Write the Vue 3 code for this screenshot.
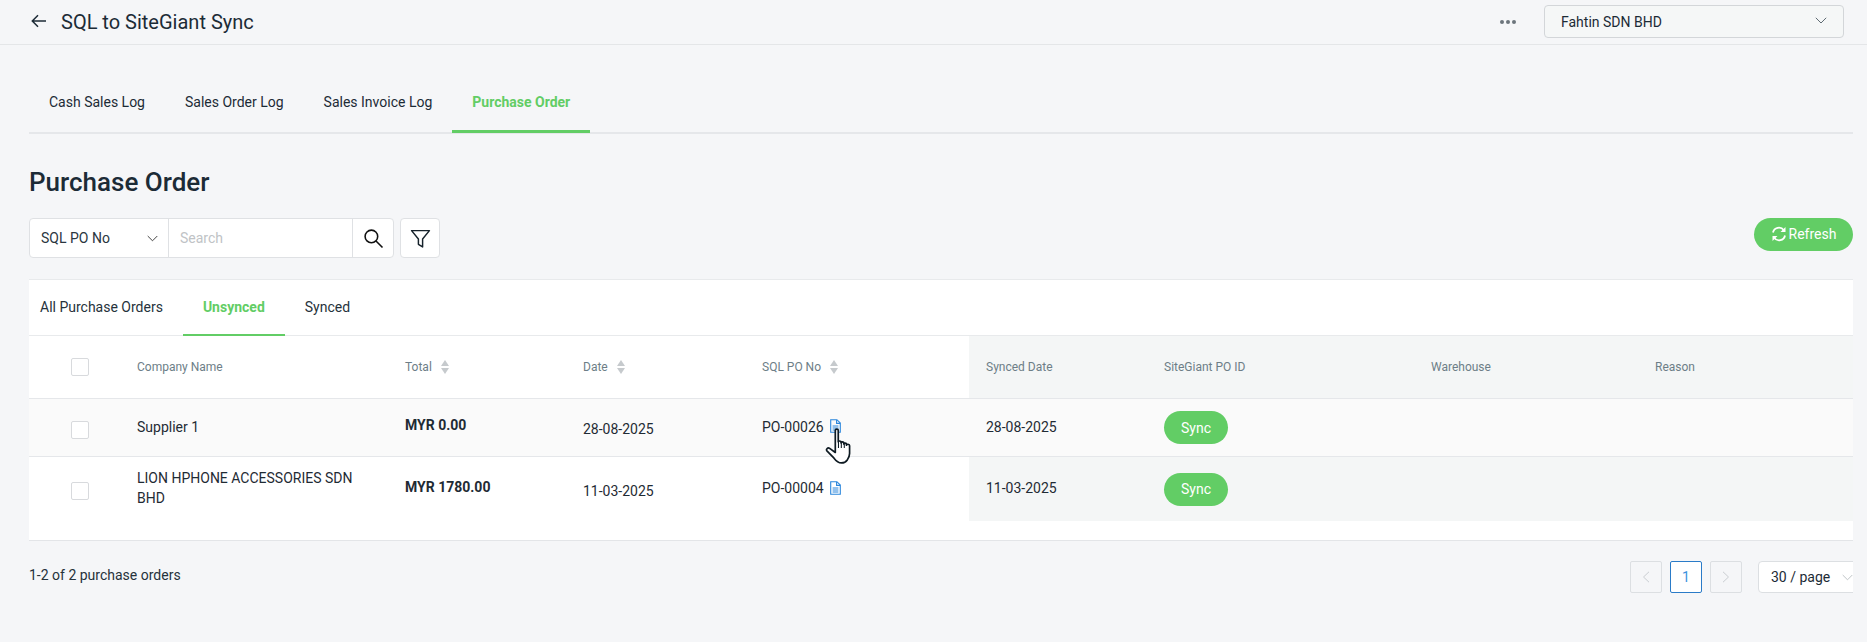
<script setup>
const navTabs = [
  { label: 'Cash Sales Log' },
  { label: 'Sales Order Log' },
  { label: 'Sales Invoice Log' },
  { label: 'Purchase Order', active: true }
]
const subTabs = [
  { label: 'All Purchase Orders' },
  { label: 'Unsynced', active: true },
  { label: 'Synced' }
]
const rows = [
  { company: 'Supplier 1', total: 'MYR 0.00', date: '28-08-2025', po: 'PO-00026', synced: '28-08-2025', hover: true },
  { company: 'LION HPHONE ACCESSORIES SDN BHD', total: 'MYR 1780.00', date: '11-03-2025', po: 'PO-00004', synced: '11-03-2025' }
]
</script>

<template>
  <div class="page">
    <header class="topbar">
      <div class="title-wrap">
        <svg class="back" viewBox="0 0 16 14" width="16" height="14" fill="none" stroke="#1c2b36" stroke-width="1.5"><path d="M15 7H1.5M7 1.2 1.3 7 7 12.8" /></svg>
        <h1 class="app-title">SQL to SiteGiant Sync</h1>
      </div>
      <div class="top-right">
        <div class="dots"><i></i><i></i><i></i></div>
        <div class="company">
          <span>Fahtin SDN BHD</span>
          <svg viewBox="0 0 12 7" width="12" height="7" fill="none" stroke="#5f6b73" stroke-width="1"><path d="M.8.8 6 6 11.2.8" /></svg>
        </div>
      </div>
    </header>

    <main class="content">
      <nav class="nav-tabs">
        <div v-for="t in navTabs" :key="t.label" class="nav-tab" :class="{ active: t.active }">{{ t.label }}</div>
      </nav>

      <h2 class="heading">Purchase Order</h2>

      <div class="toolbar">
        <div class="tools">
          <div class="search-group">
            <div class="field-select">
              <span>SQL PO No</span>
              <svg viewBox="0 0 12 7" width="11" height="7" fill="none" stroke="#333" stroke-width="1"><path d="M.8.8 6 6 11.2.8" /></svg>
            </div>
            <div class="search-input">Search</div>
            <div class="search-btn">
              <svg viewBox="0 0 20 20" width="21" height="21" fill="none" stroke="#111" stroke-width="1.5"><circle cx="8" cy="8" r="6" /><path d="m12.4 12.4 6.2 6.2" /></svg>
            </div>
          </div>
          <div class="filter-btn">
            <svg viewBox="0 0 20 20" width="21" height="21" fill="none" stroke="#16222b" stroke-width="1.4" stroke-linejoin="round"><path d="M1.5 2.5h17l-6.500 8v7.500l-4-2.500v-5z" /></svg>
          </div>
        </div>
        <div class="refresh">
          <svg viewBox="0 0 16 16" width="16" height="16" fill="none" stroke="#fff" stroke-width="1.8"><path d="M2 6.500A6 6 0 0 1 12.800 4.200" /><path d="M14.500 1v5H9.500z" fill="#fff" stroke="none" /><path d="M14 9.500A6 6 0 0 1 3.200 11.800" /><path d="M1.500 15v-5h5z" fill="#fff" stroke="none" /></svg>
          <span>Refresh</span>
        </div>
      </div>

      <section class="card">
        <div class="sub-tabs">
          <div v-for="t in subTabs" :key="t.label" class="sub-tab" :class="{ active: t.active }">{{ t.label }}</div>
        </div>

        <div class="grid head">
          <div class="cell cb"><span class="check"></span></div>
          <div class="cell">Company Name</div>
          <div class="cell">Total<span class="sort"><i class="up"></i><i class="down"></i></span></div>
          <div class="cell">Date<span class="sort"><i class="up"></i><i class="down"></i></span></div>
          <div class="cell">SQL PO No<span class="sort"><i class="up"></i><i class="down"></i></span></div>
          <div class="cell panel first">Synced Date</div>
          <div class="cell panel">SiteGiant PO ID</div>
          <div class="cell panel">Warehouse</div>
          <div class="cell panel">Reason</div>
        </div>

        <div v-for="r in rows" :key="r.po" class="grid row" :class="{ hover: r.hover }">
          <div class="cell cb"><span class="check"></span></div>
          <div class="cell company-name">{{ r.company }}</div>
          <div class="cell total">{{ r.total }}</div>
          <div class="cell date">{{ r.date }}</div>
          <div class="cell po">
            {{ r.po }}
            <svg class="doc" viewBox="0 0 11 14" width="11" height="14" fill="none" stroke="#2b86dc" stroke-width="1.1"><path d="M.7.7h6.200l3.400 3.400v9.200H.7z" /><path d="M6.600.9v3.500h3.500M2.600 7h5.800M2.600 9h5.800M2.600 11h5.800" /></svg>
          </div>
          <div class="cell panel first synced">{{ r.synced }}</div>
          <div class="cell panel"><button class="sync">Sync</button></div>
          <div class="cell panel"></div>
          <div class="cell panel"></div>
        </div>
      </section>

      <footer class="pager">
        <span class="count">1-2 of 2 purchase orders</span>
        <div class="pages">
          <div class="pg muted">
            <svg viewBox="0 0 8 12" width="8" height="12" fill="none" stroke="#c9cdd1" stroke-width="1"><path d="M7 .8 1.500 6 7 11.200" /></svg>
          </div>
          <div class="pg current">1</div>
          <div class="pg muted">
            <svg viewBox="0 0 8 12" width="8" height="12" fill="none" stroke="#c9cdd1" stroke-width="1"><path d="M1 .8 6.500 6 1 11.200" /></svg>
          </div>
          <div class="per-page">
            <span>30 / page</span>
            <svg viewBox="0 0 12 7" width="11" height="7" fill="none" stroke="#b9bec2" stroke-width="1"><path d="M.8.8 6 6 11.200.8" /></svg>
          </div>
        </div>
      </footer>
    </main>

    <svg class="cursor" viewBox="0 0 26 34" width="28" height="36">
      <path d="M9.500 2.200c0-1.600 2.800-1.600 2.800 0V13c0-1 2.600-1 2.600.2V14c0-1.200 2.600-1.200 2.600.2v.8c0-1.200 2.600-1.100 2.600.3v.9c0-1.200 2.900-1.200 2.900.6V24c0 3-1.400 5-2.200 6.200-1.200 1.800-3.500 2.800-5.500 2.800-3.500 0-5.500-2.500-7-4.500L1.600 21.600c-1.200-1.600.8-3.500 2.600-2.300l5.300 3.800z" fill="#fff" stroke="#0e1a22" stroke-width="1.6" stroke-linejoin="round" />
      <path d="M12.500 13v6M15.200 14v5M18 15v4" stroke="#0e1a22" stroke-width="1" fill="none" />
    </svg>
  </div>
</template>

<style>
html, body { margin: 0; background: #f5f6f8; }
</style>

<style scoped>
.page { position: relative; width: 1867px; height: 642px; overflow: hidden; background: #f5f6f8; font-family: Roboto, sans-serif; font-size: 14px; color: #1c2b36; }
.topbar { box-sizing: border-box; height: 45px; display: flex; align-items: center; justify-content: space-between; padding: 0 23px 0 31px; border-bottom: 1px solid #e4e6e8; }
.title-wrap { display: flex; align-items: center; gap: 14px; }
.back { margin-bottom: 3px; }
.app-title { margin: 0; font-size: 20px; font-weight: 400; line-height: 26px; color: #1c2b36; }
.top-right { display: flex; align-items: center; gap: 28px; }
.dots { display: flex; gap: 2px; }
.dots i { display: block; width: 4px; height: 4px; border-radius: 50%; background: #6c757c; }
.company { box-sizing: border-box; width: 300px; height: 33px; display: flex; align-items: center; justify-content: space-between; padding: 0 16px; margin-bottom: 1px; border: 1px solid #d3d6d9; border-radius: 4px; background: #f5f7f7; }
.company span { line-height: 20px; padding-top: 1px; }
.company svg { margin-bottom: 3px; }
.content { width: 1824px; margin-left: 29px; overflow: hidden; }
.nav-tabs { box-sizing: border-box; height: 62px; margin-top: 27px; display: flex; border-bottom: 2px solid #e5e7ea; }
.nav-tab { box-sizing: border-box; height: 61px; padding: 20px 20px 0; line-height: 20px; border-bottom: 3px solid transparent; }
.nav-tab.active { color: #62cd65; font-weight: 700; border-bottom-color: #62cd65; }
.heading { margin: 32px 0 0; font-size: 26px; line-height: 32px; font-weight: 500; color: #1c2b36; }
.toolbar { display: flex; justify-content: space-between; align-items: flex-start; margin-top: 20px; }
.tools { display: flex; gap: 6px; }
.search-group { box-sizing: border-box; height: 40px; display: flex; border: 1px solid #dfe1e4; border-radius: 4px; background: #fff; }
.field-select { box-sizing: border-box; width: 139px; display: flex; align-items: center; justify-content: space-between; padding: 0 10px 0 11px; border-right: 1px solid #dfe1e4; color: #2a3640; }
.search-input { box-sizing: border-box; width: 184px; padding-left: 11px; line-height: 38px; color: #c0c3c6; border-right: 1px solid #dfe1e4; }
.search-btn { width: 40px; display: flex; align-items: center; justify-content: center; }
.filter-btn { box-sizing: border-box; width: 40px; height: 40px; display: flex; align-items: center; justify-content: center; border: 1px solid #dfe1e4; border-radius: 4px; background: #fff; }
.refresh { box-sizing: border-box; width: 99px; height: 33px; padding-bottom: 1px; display: flex; align-items: center; justify-content: center; gap: 2px; border-radius: 17px; background: #62cd65; color: #fff; }
.card { box-sizing: border-box; margin-top: 21px; height: 262px; background: #fff; border-top: 1px solid #e8eaec; border-bottom: 1px solid #e3e5e8; }
.sub-tabs { box-sizing: border-box; height: 56px; display: flex; padding-left: 11px; border-bottom: 1px solid #e8eaec; }
.sub-tab { box-sizing: border-box; height: 56px; padding: 17px 20px 0 20px; line-height: 20px; border-bottom: 2px solid transparent; color: #26323b; }
.sub-tab:first-child { padding-left: 0; }
.sub-tab.active { color: #62cd65; font-weight: 700; border-bottom-color: #62cd65; }
.grid { display: grid; grid-template-columns: 108px 268px 178px 179px 207px 195px 267px 224px 198px; }
.head { height: 63px; font-size: 12px; color: #6d7e87; border-bottom: 1px solid #e5e7ea; box-sizing: border-box; }
.cell { display: flex; align-items: center; min-width: 0; }
.cb { padding-left: 42px; }
.check { display: block; box-sizing: border-box; width: 18px; height: 18px; border: 1px solid #d8dadd; border-radius: 2px; background: #fff; }
.panel { background: #f4f6f6; }
.panel.first { padding-left: 17px; }
.sort { display: inline-flex; flex-direction: column; gap: 2px; margin-left: 9px; }
.sort i { display: block; width: 0; height: 0; border-left: 4.5px solid transparent; border-right: 4.5px solid transparent; }
.sort .up { border-bottom: 6px solid #c6cacd; }
.sort .down { border-top: 6px solid #c6cacd; }
.row { box-sizing: border-box; border-bottom: 1px solid #e5e7ea; color: #1f2b34; }
.row.hover { height: 58px; background: #fafafa; }
.row.hover .panel { background: #fafafa; }
.row:not(.hover) { height: 64px; border-bottom: 0; }
.row:not(.hover) .cb { padding-top: 4px; }
.row.hover .cb { padding-top: 5px; }
.company-name { line-height: 20px; padding-right: 40px; padding-bottom: 2px; }
.total { font-weight: 700; padding-bottom: 5px; }
.date { padding-top: 3px; }
.po { gap: 6px; padding-bottom: 2px; }
.synced { padding-bottom: 2px; }
.doc { margin-bottom: 1px; }
.sync { box-sizing: border-box; width: 64px; height: 33px; padding: 0; border: 0; border-radius: 17px; background: #62cd65; color: #fff; font: 14px Roboto, sans-serif; }
.pager { display: flex; justify-content: space-between; align-items: center; margin-top: 20px; height: 32px; }
.count { color: #26323b; padding-bottom: 4px; }
.pages { display: flex; align-items: center; margin-right: -17px; }
.pg { box-sizing: border-box; width: 32px; height: 32px; margin-right: 8px; display: flex; align-items: center; justify-content: center; border: 1px solid #dcdfe2; border-radius: 2px; background: #f5f6f8; }
.pg.current { border-color: #2a7bc8; background: #fff; color: #3d92dd; }
.per-page { box-sizing: border-box; width: 112px; height: 32px; margin-left: 8px; display: flex; align-items: center; gap: 12px; padding-left: 12px; border: 1px solid #dcdfe2; border-radius: 4px; background: #fff; }
.cursor { position: absolute; left: 825px; top: 428px; }
</style>
